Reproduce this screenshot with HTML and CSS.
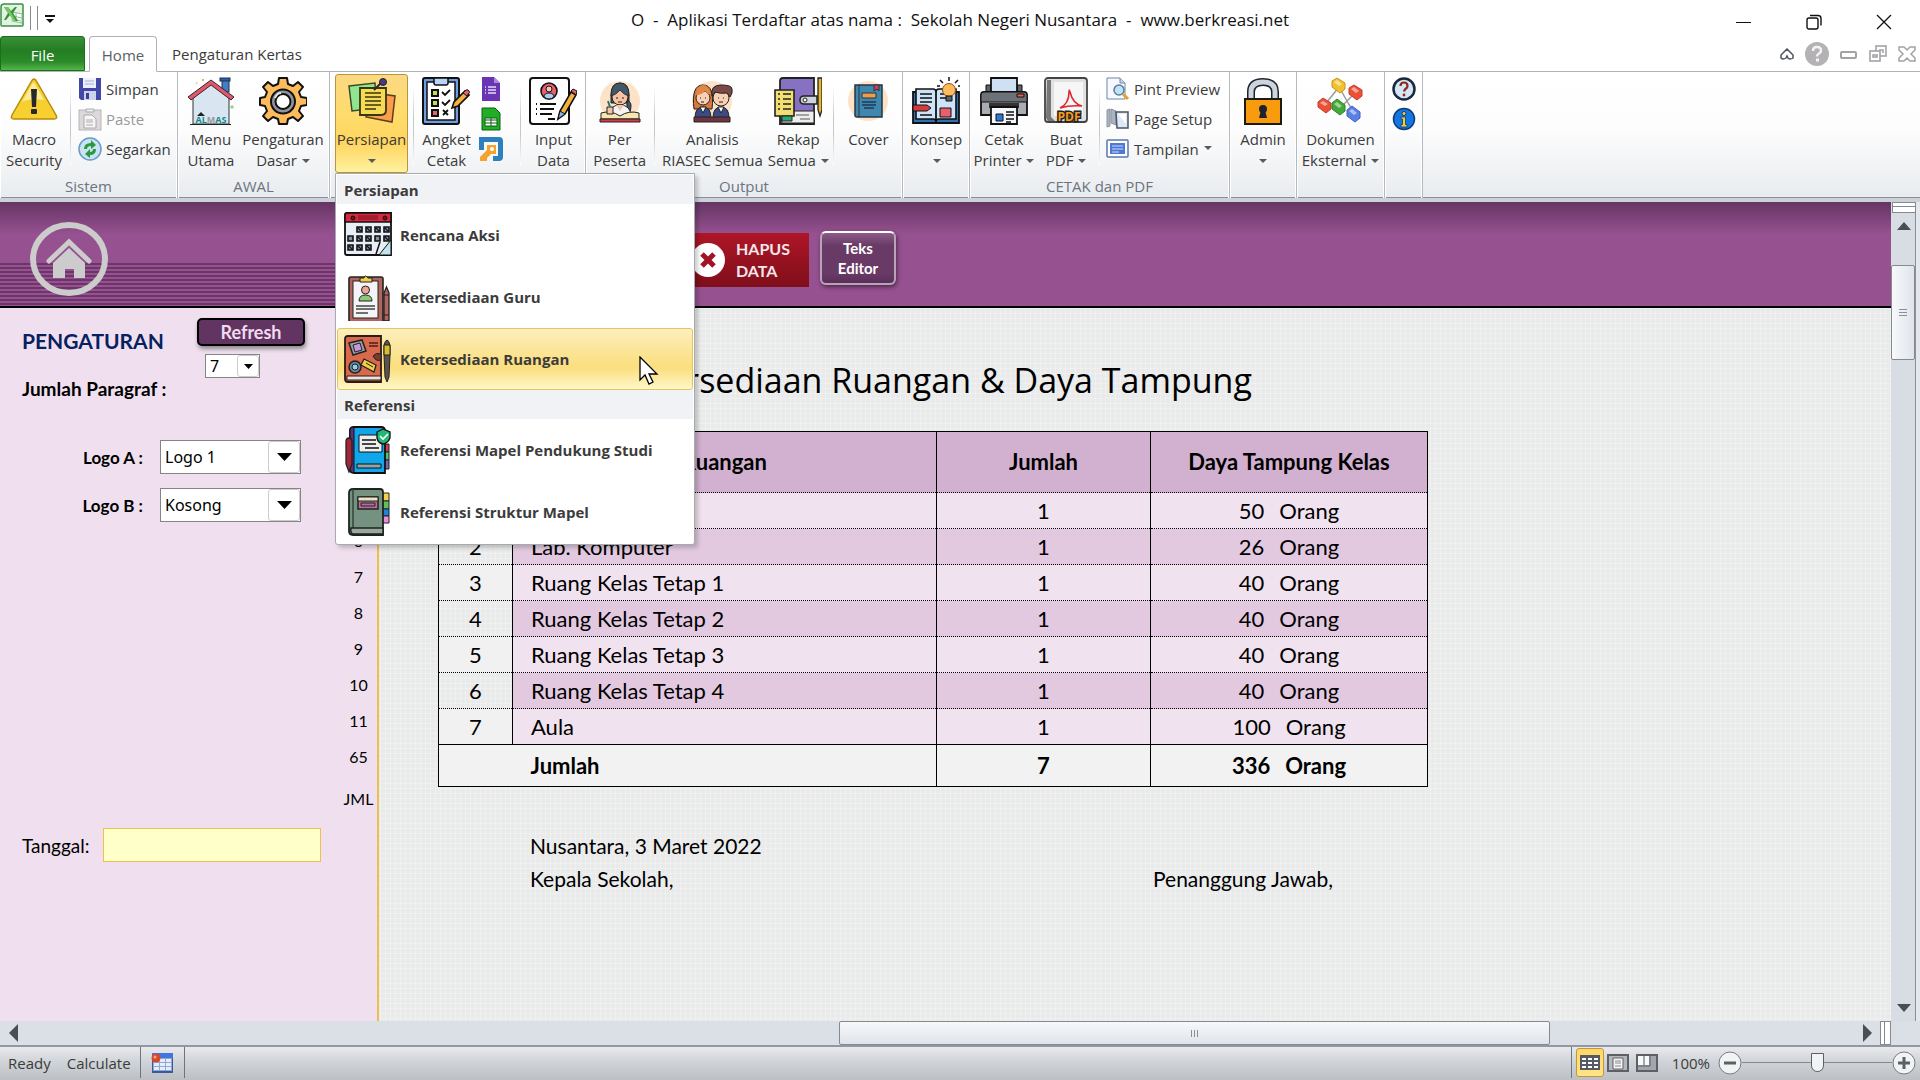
FILE: index.html
```html
<!DOCTYPE html>
<html lang="id">
<head>
    <meta charset="UTF-8">
    <meta name="viewport" content="width=device-width, initial-scale=1.0">
    <title>Ketersediaan Ruangan &amp; Daya Tampung</title>
    <link rel="stylesheet" href="styles.css">
</head>
<body>

    <header class="titlebar">
        <div class="quick-access">
            <svg width="24" height="24" viewBox="0 0 24 24">
                <path d="M4 1h18a1 1 0 0 1 1 1v20a1 1 0 0 1-1 1H2a1 1 0 0 1-1-1V4q0-3 3-3z" fill="#e3f3e1" stroke="#3f8f4a" stroke-width="1.5"/>
                <path d="M13 9l9 2v9l-10-2z" fill="#fff" stroke="#8cc08c"/>
                <path d="M13 13l9 2M13 16l8 2M16 10v9" stroke="#8cc08c"/>
                <path d="M4 4h4l3 4 4-4h2l-4 6 5 8h-4l-4-6-4 5H4l4-7z" fill="#2f9436"/>
                <path d="M4 4h4l8 14h-2z" fill="#7cc66a"/>
            </svg>
            <span class="qa-line"></span>
            <span class="qa-line"></span>
            <button class="qa-more" aria-label="Customize Quick Access Toolbar">
                <svg width="10" height="9" viewBox="0 0 10 9"><path d="M0 0h10v2H0zM1 4h8L5 8z" fill="#111"/></svg>
            </button>
        </div>
        <div class="window-title">O  -  Aplikasi Terdaftar atas nama :  Sekolah Negeri Nusantara  -  www.berkreasi.net</div>
        <div class="window-buttons">
            <button aria-label="Minimize"><svg width="16" height="16" viewBox="0 0 16 16"><path d="M0 8.5h15" stroke="#111"/></svg></button>
            <button aria-label="Restore"><svg width="16" height="16" viewBox="0 0 16 16" fill="none" stroke="#111" stroke-width="1.4"><rect x="1" y="4" width="11" height="11" rx="2"/><path d="M4 1.5h8q3 0 3 3v7"/></svg></button>
            <button aria-label="Close"><svg width="16" height="16" viewBox="0 0 16 16"><path d="M1 1l14 14M15 1L1 15" stroke="#111" stroke-width="1.3"/></svg></button>
        </div>
    </header>

    <nav class="tabs">
        <a href="#" class="tab tab-file">File</a>
        <a href="#" class="tab tab-active">Home</a>
        <a href="#" class="tab">Pengaturan Kertas</a>
        <div class="doc-buttons">
            <button aria-label="Minimize the Ribbon"><svg width="14" height="12" viewBox="0 0 14 12"><path d="M7 1l6 6v3q-3 2-5 0L7 8 6 10q-3 2-5 0V7z" fill="#fff" stroke="#4b5560" stroke-width="1.5"/></svg></button>
            <button aria-label="Help"><svg width="24" height="24" viewBox="0 0 24 24"><circle cx="12" cy="12" r="12" fill="#b4b2b4"/><path d="M8 9q0-4 4-4t4 3.500q0 2-2 3t-2 3" fill="none" stroke="#f4f4f4" stroke-width="2.500"/><rect x="11" y="16.500" width="3" height="3" fill="#f4f4f4"/></svg></button>
            <button aria-label="Minimize Window"><svg width="18" height="18" viewBox="0 0 18 18"><rect x="1" y="7" width="15" height="6" rx="1" fill="#fff" stroke="#a3a3a6" stroke-width="2"/></svg></button>
            <button aria-label="Restore Window"><svg width="18" height="18" viewBox="0 0 18 18" fill="#fff" stroke="#a3a3a6" stroke-width="1.600"><rect x="7" y="1" width="10" height="10"/><path d="M10 5h4v3"/><rect x="1" y="6" width="10" height="10"/><rect x="4" y="10" width="4" height="2"/></svg></button>
            <button aria-label="Close Window"><svg width="18" height="18" viewBox="0 0 18 18"><path d="M1 2h5l3 3 3-3h5v3l-4 4 4 4v3h-5l-3-3-3 3H1v-3l4-4-4-4z" fill="#fff" stroke="#a3a3a6" stroke-width="1.500"/></svg></button>
        </div>
    </nav>

    <div class="ribbon">
        <section class="group group-sistem">
            <div class="tools">
                <button class="big w70">
                    <svg width="48" height="48" viewBox="0 0 48 48"><path d="M21 5q3-6 6 0l19 33q2 4-2 4H4q-4 0-2-4z" fill="#f7cf2f" stroke="#b58a12" stroke-width="1.500"/><path d="M22 7q2-3 3 0l9 16q-14-2-22 2z" fill="#fdeb96"/><path d="M21 12h6l-1 18h-4z" fill="#26282b"/><rect x="21" y="32" width="6" height="5" rx="1" fill="#26282b"/></svg>
                    <span>Macro<br>Security</span>
                </button>
                <span class="sep"></span>
                <div class="stack">
                    <button class="small"><svg width="24" height="24" viewBox="0 0 24 24"><path d="M1 1h22v22H3l-2-2z" fill="#4347a8"/><path d="M5 1h13v10H5z" fill="#eef1fb"/><path d="M7 4h9M7 7h9" stroke="#a6aed8"/><rect x="6" y="14" width="12" height="9" fill="#cdd3ea"/><rect x="8" y="16" width="3" height="6" fill="#3d3f95"/></svg>Simpan</button>
                    <button class="small" disabled><svg width="24" height="24" viewBox="0 0 24 24"><rect x="1" y="3" width="22" height="20" fill="#dcd8dc" stroke="#b9b4b9"/><path d="M8 5V2h8v3z" fill="#eee" stroke="#aaa"/><path d="M6 8h8l4 4v9H6z" fill="#f7f7f7" stroke="#aaa"/><path d="M8 13h7M8 15h7M8 18h7" stroke="#aaa"/></svg>Paste</button>
                    <button class="small"><svg width="24" height="24" viewBox="0 0 24 24"><circle cx="12" cy="12" r="11" fill="#cbe3f6" stroke="#6c9ac6" stroke-width="1.500"/><path d="M6 12q0-6 7-6V3l5 5-5 4V9q-4 0-4 3z" fill="#2a9a3a"/><path d="M18 12q0 6-6 6v3l-5-4 5-5v3q3 0 3-3z" fill="#2a9a3a"/></svg>Segarkan</button>
                </div>
            </div>
            <h2>Sistem</h2>
        </section>

        <section class="group group-awal">
            <div class="tools">
                <button class="big w60">
                    <svg width="48" height="48" viewBox="0 0 48 48"><rect x="35" y="2" width="7" height="13" fill="#3f7fc8" stroke="#20304a"/><rect x="33" y="1" width="10" height="3" fill="#2b5fa5" stroke="#20304a"/><path d="M6 20L24 7l18 13v27H6z" fill="#d9e5f1" stroke="#333"/><path d="M1 20L24 3l23 17-3 3L24 8 4 23z" fill="#e0566b" stroke="#33262c"/><path d="M3 47.500h41" stroke="#222"/><path d="M10 39l4-4 4 4z" fill="#222"/><text x="24" y="46" text-anchor="middle" class="almas">AL<tspan fill="#999">M</tspan>AS</text><path d="M9 5l2 1-2 1zM15 2h2v2h-2z" fill="#f2b04e"/><path d="M45 28v4M43 30h4" stroke="#7cc66a"/></svg>
                    <span>Menu<br>Utama</span>
                </button>
                <button class="big w84">
                    <svg width="48" height="48" viewBox="0 0 48 48"><path d="M20 1h8l1 6 5 2 5-4 5 5-4 5 2 5 6 1v7l-6 1-2 5 4 5-5 5-5-4-5 2-1 5h-8l-1-5-5-2-5 4-5-5 4-5-2-5-5-1v-7l5-1 2-5-4-5 5-5 5 4 5-2z" fill="#fdbb5b" stroke="#111" stroke-width="2" stroke-linejoin="round"/><circle cx="24" cy="24.500" r="12" fill="#8f949c" stroke="#111" stroke-width="2"/><circle cx="24" cy="24.500" r="7.500" fill="#fff" stroke="#111" stroke-width="2"/><path d="M16 21q2-5 6-5" fill="none" stroke="#dfe2e6" stroke-width="2"/></svg>
                    <span>Pengaturan<br>Dasar <i class="caret"></i></span>
                </button>
            </div>
            <h2>AWAL</h2>
        </section>

        <section class="group group-persiapan">
            <div class="tools">
                <div class="menu-anchor">
                    <button class="big w73 open" aria-haspopup="true" aria-expanded="true">
                        <svg width="48" height="48" viewBox="0 0 48 48"><path d="M1 9l26-3 1 25-24 3z" fill="#8fe68e" stroke="#3c4a2a" stroke-width="1.500"/><path d="M26 16l21 3-3 26-26-5z" fill="#fb9d4c" stroke="#5a3f1a" stroke-width="1.500"/><path d="M12 11h26v22q0 5-5 5H12z" fill="#f5da55" stroke="#3c3512" stroke-width="1.800"/><path d="M17 16h16M17 20h16M17 24h16M17 28h16M17 32h11" stroke="#3c3512" stroke-width="1.600"/><path d="M26 13l7-7" stroke="#2c2630" stroke-width="2"/><circle cx="35" cy="5" r="3.500" fill="#4a3a86" stroke="#222"/></svg>
                        <span>Persiapan<br><i class="caret"></i></span>
                    </button>

                    <div class="menu" role="menu">
                        <h3>Persiapan</h3>
                        <button class="menu-item" role="menuitem">
                            <svg width="48" height="48" viewBox="0 0 48 48"><path d="M1 4q0-2 2-2h44v42H3q-2 0-2-2z" fill="#e9edf5" stroke="#111" stroke-width="1.800"/><path d="M1 4q0-2 2-2h44v9H1z" fill="#d6293f" stroke="#111" stroke-width="1.500"/><path d="M14 4h20v5H14z" fill="#a81c30"/><circle cx="9" cy="7" r="2" fill="#7d1222" stroke="#111"/><circle cx="41" cy="7" r="2" fill="#7d1222" stroke="#111"/><g fill="#7f93ad" stroke="#111" stroke-width="1.600"><path d="M13 16h5v5h-5zM22 16h5v5h-5zM31 16h5v5h-5zM40 16h5v5h-5zM4 25h5v5H4zM13 25h5v5h-5zM22 25h5v5h-5zM31 25h5v5h-5zM40 25h5v5h-5zM4 34h5v5H4zM13 34h5v5h-5zM22 34h5v5h-5z"/><path d="M14 17l3 3M23 17l3 3M32 17l3 3M41 17l3 3M14 26l3 3M23 26l3 3M41 26l3 3M5 35l3 3M14 35l3 3M23 35l3 3" stroke-width="1.200"/></g><path d="M35 44L47 29v15z" fill="#bfe4ee" stroke="#111"/><path d="M36 31l-4 12" stroke="#111" stroke-width="1.500"/></svg>
                            Rencana Aksi
                        </button>
                        <button class="menu-item" role="menuitem">
                            <svg width="48" height="48" viewBox="0 0 48 48"><rect x="5" y="4" width="34" height="45" rx="2" fill="#b0655f" stroke="#222" stroke-width="1.600"/><rect x="9" y="8" width="25" height="37" fill="#f4f4f6" stroke="#222"/><path d="M16 9V5h4q1-4 4 0h4v4z" fill="#f1d14b" stroke="#222"/><circle cx="21.500" cy="17" r="4" fill="#eba59a" stroke="#222"/><path d="M15 28q0-6 6.500-6t6.500 6z" fill="#8fc878" stroke="#222"/><path d="M12 33h19M12 36h19M12 40h12" stroke="#444" stroke-width="1.600"/><path d="M40 20l2.500-6 2.500 6v28h-5z" fill="#b0655f" stroke="#222" stroke-width="1.300"/><path d="M40 22h5M40 42h5" stroke="#222"/></svg>
                            Ketersediaan Guru
                        </button>
                        <button class="menu-item hover" role="menuitem">
                            <svg width="48" height="48" viewBox="0 0 48 48"><path d="M1 4q0-3 3-3h33v46H4q-3 0-3-3z" fill="#d8694d" stroke="#2b1a16" stroke-width="1.800"/><path d="M3 41h34v4H3z" fill="#e9e2df" stroke="#2b1a16"/><path d="M5 8l13-3 4 11-13 4z" fill="#999da4" stroke="#222" stroke-width="1.500"/><path d="M9 10l7-2 2 7-7 2z" fill="#c496dc" stroke="#222"/><path d="M25 8h9M25 11h9" stroke="#4a2018" stroke-width="1.500"/><circle cx="11" cy="32" r="6" fill="#6b8294" stroke="#222" stroke-width="1.500"/><circle cx="11" cy="32" r="3" fill="#8ed0ef" stroke="#222"/><path d="M20 24l12 6-2 7-13-7z" fill="#f0cf45" stroke="#222" stroke-width="1.300"/><path d="M22 28l7 4" stroke="#222"/><path d="M29 21q3-4 8-2v6q-5 2-8-4z" fill="#7a3a2e" stroke="#222"/><path d="M40 10q3-10 6 0v10l-1 22-2 5-2-5-1-22z" fill="#5b5549" stroke="#222"/><path d="M40 10h6v10h-6z" fill="#d8bd31" stroke="#222"/></svg>
                            Ketersediaan Ruangan
                            <svg class="cursor" width="20" height="29" viewBox="0 0 20 29"><path d="M1 1v23l5-5 4 9 4-2-4-8h8z" fill="#fff" stroke="#000" stroke-width="1.300"/></svg>
                        </button>
                        <h3>Referensi</h3>
                        <button class="menu-item" role="menuitem">
                            <svg width="48" height="48" viewBox="0 0 48 48"><path d="M36 18h9v8h-9z" fill="#d83a4c" stroke="#222"/><path d="M36 26h9v8h-9z" fill="#4cc46b" stroke="#222"/><path d="M36 34h9v9h-9z" fill="#7c63b8" stroke="#222"/><path d="M6 4q0-3 4-3h27q4 0 4 4v42H10q-4 0-4-4z" fill="#10a6ea" stroke="#111" stroke-width="1.800"/><path d="M6 4q0-3 4-3v46q-4 0-4-4z" fill="#54357c" stroke="#111"/><path d="M15 9h23v17H15z" fill="#eee" stroke="#111"/><path d="M18 14h14M18 18h14M21 22h14" stroke="#111" stroke-width="1.600"/><path d="M13 38h24v4H13z" fill="#8fa5ad" stroke="#111"/><path d="M33 6l6-3 7 3v6q-2 5-7 6-5-1-6-6z" fill="#21b877" stroke="#111" stroke-width="1.300"/><path d="M36 10l3 3 5-5" fill="none" stroke="#fff" stroke-width="1.600"/><path d="M2 16q0-4 3-4t3 4v22l-3 8-3-8z" fill="#a32537" stroke="#222" stroke-width="1.300"/></svg>
                            Referensi Mapel Pendukung Studi
                        </button>
                        <button class="menu-item" role="menuitem">
                            <svg width="48" height="48" viewBox="0 0 48 48"><path d="M38 5h7v8h-7z" fill="#f1d14b" stroke="#222"/><path d="M38 13h7v8h-7z" fill="#62bd5e" stroke="#222"/><path d="M38 21h7v7h-7z" fill="#1b86dc" stroke="#222"/><path d="M38 28h7v7h-7z" fill="#e88fd8" stroke="#222"/><path d="M5 5q0-4 4-4h27q3 0 3 3v43H9q-4 0-4-4z" fill="#75917f" stroke="#1d2420" stroke-width="1.800"/><path d="M9 1v39" stroke="#35443b" stroke-width="1.500"/><path d="M7 40h32v6H9q-3-1-2-6z" fill="#9aa79f" stroke="#1d2420" stroke-width="1.500"/><path d="M14 9h20v12H14z" fill="#c268a0" stroke="#1d2420" stroke-width="1.500"/><path d="M14 9h20v4H14z" fill="#efe3c4" stroke="#1d2420"/><path d="M17 15h14v3H17z" fill="#a2779a" stroke="#1d2420"/></svg>
                            Referensi Struktur Mapel
                        </button>
                    </div>
                </div>
                <span class="sep"></span>
                <button class="big w60">
                    <svg width="48" height="48" viewBox="0 0 48 48"><rect x="1" y="1" width="36" height="46" rx="2" fill="#6f9de0" stroke="#111" stroke-width="2"/><path d="M5 5h28v38H5z" fill="#fff" stroke="#111" stroke-width="1.500"/><path d="M12 1h14v5q0 2-2 2H14q-2 0-2-2z" fill="#b8d3f6" stroke="#111" stroke-width="1.500"/><g stroke="#111" stroke-width="2"><path d="M10 13h6v6h-6zM10 23h6v6h-6z" fill="#c6dd4c"/><path d="M10 33h6v6h-6z" fill="#e8606c"/></g><path d="M20 15l3 3 5-5M20 25l3 3 5-5M21 33l5 5M26 33l-5 5" fill="none" stroke="#111" stroke-width="1.800"/><path d="M30 31l2-6 11-11 4 4-11 11z" fill="#f5b23f" stroke="#111" stroke-width="1.600"/><path d="M41 16l3-3q2-1 3 1t0 2l-2 3z" fill="#e8606c" stroke="#111"/></svg>
                    <span>Angket<br>Cetak</span>
                </button>
                <div class="stack stack-angket">
                    <button class="small" aria-label="Google Forms"><svg width="24" height="24" viewBox="0 0 24 24"><path d="M3 0h12l6 6v18H3z" fill="#6a35b5"/><path d="M15 0v6h6z" fill="#a78bd8"/><path d="M6 10h1M6 13h1M6 16h1M9 10h8M9 13h8M9 16h8" stroke="#e6dbf8" stroke-width="1.500"/></svg></button>
                    <button class="small" aria-label="Google Sheets"><svg width="24" height="24" viewBox="0 0 24 24"><path d="M3 1h13l5 5v17H3z" fill="#1fae26" stroke="#0c5c12"/><path d="M6 11h12v8H6z" fill="#fff" stroke="#0c5c12"/><path d="M6 13h12M6 16h12M12 11v8" stroke="#0c5c12"/></svg></button>
                    <button class="small" aria-label="Angket Online"><svg width="24" height="24" viewBox="0 0 24 24"><path d="M0 0h20q4 0 4 4v16q0 4-4 4h-6v-5h5V5H5v8H0z" fill="#2d7fbe"/><path d="M8 8h9v9h-5l-4 4v3H1v-4l7-7z" fill="#f5a32f"/><circle cx="13" cy="12" r="2" fill="#fff"/></svg></button>
                </div>
                <span class="sep"></span>
                <button class="big w60">
                    <svg width="48" height="48" viewBox="0 0 48 48"><rect x="1" y="1" width="39" height="46" rx="3" fill="#fff" stroke="#111" stroke-width="2"/><circle cx="20" cy="14" r="8" fill="#e8606c" stroke="#111" stroke-width="1.600"/><circle cx="20" cy="12" r="3" fill="#f7c6b4" stroke="#111"/><path d="M15 20q0-4 5-4t5 4q-5 4-10 0z" fill="#a9cdf2" stroke="#111"/><path d="M7 27h1M11 27h16M7 32h1M11 32h14M7 37h1M11 37h12M19 42h7" stroke="#111" stroke-width="1.800"/><path d="M29 42l2-8 11-19 5 3-11 19z" fill="#f5b23f" stroke="#111" stroke-width="1.600"/><path d="M29 42l2-8 5 3z" fill="#7fb2e6" stroke="#111"/><path d="M42 14l2-2 4 2-1 4z" fill="#e8606c" stroke="#111"/></svg>
                    <span>Input<br>Data</span>
                </button>
            </div>
            <h2></h2>
        </section>

        <section class="group group-output">
            <div class="tools">
                <button class="big w64">
                    <svg width="48" height="48" viewBox="0 0 48 48"><circle cx="24" cy="24" r="20" fill="#fce3c8"/><path d="M15 18q0-12 9-12t9 12v8H15z" fill="#41586b" stroke="#222"/><circle cx="24" cy="20" r="8" fill="#f6c4a4" stroke="#222"/><path d="M15 19q5-1 9-6 4 5 9 6 0-13-9-13t-9 13z" fill="#41586b" stroke="#222" stroke-width=".8"/><path d="M31 24q4 0 4 5t-2 7q-3-4-2-12z" fill="#41586b" stroke="#222"/><path d="M13 40q0-12 11-12t11 12z" fill="#f4f4f6" stroke="#222"/><path d="M20 28l4 6 4-6z" fill="#f6c4a4"/><path d="M20 21h2M26 21h2M22 25h4" stroke="#222"/><path d="M5 36q10-3 19 3 9-6 19-3v6H5z" fill="#f7e7b0" stroke="#222"/><path d="M4 42h40v3H4z" fill="#d83a4c" stroke="#222"/><path d="M11 30h6v7h-6z" fill="#f6c4a4" stroke="#222"/><path d="M12 24l2 6" stroke="#1f7a6c" stroke-width="2"/></svg>
                    <span>Per<br>Peserta</span>
                </button>
                <span class="sep"></span>
                <button class="big w108">
                    <svg width="48" height="48" viewBox="0 0 48 48"><circle cx="24" cy="24" r="20" fill="#fce3c8"/><path d="M6 32q-3-24 9-24t9 24z" fill="#d9783c" stroke="#222"/><circle cx="15" cy="21" r="7" fill="#f9d0b4" stroke="#222"/><path d="M8 18q6 0 9-4 3 4 5 3-1-9-7-9t-7 10z" fill="#e28846"/><circle cx="33" cy="21" r="8" fill="#f9d0b4" stroke="#222"/><path d="M24 19q-2-11 9-11t11 4q1 4-2 8l-3-4q-7 1-12-1z" fill="#7b4a46" stroke="#222"/><path d="M7 41q0-11 8-11t8 11zM25 41q0-11 8-11t8 11z" fill="#3c4a86" stroke="#222"/><path d="M12 30l3 6 3-6zM30 30l3 6 3-6z" fill="#fff" stroke="#222"/><path d="M12 21h1M17 21h1M30 21h1M35 21h1M13 25h3M31 25h4" stroke="#222"/><path d="M6 40h36v5H6z" fill="#6e3440" stroke="#222"/></svg>
                    <span>Analisis<br>RIASEC Semua</span>
                </button>
                <button class="big w64">
                    <svg width="48" height="48" viewBox="0 0 48 48"><path d="M6 4q0-3 3-3h31v46H6z" fill="#8671c2" stroke="#222" stroke-width="1.800"/><path d="M6 34h34v12H8z" fill="#eee" stroke="#222"/><path d="M22 38h13M26 42h10" stroke="#555"/><path d="M26 23q0-4 4-4h13v8H30q-4 0-4-4z" fill="#cfd3db" stroke="#222" stroke-width="1.500"/><circle cx="31" cy="23" r="2" fill="#fff" stroke="#222"/><path d="M1 13h19v26H1z" fill="#f2df72" stroke="#222" stroke-width="1.600"/><path d="M4 17h2M9 17h8M4 22h2M9 22h8M4 27h2M9 27h8M4 32h2M9 32h8" stroke="#222" stroke-width="1.600"/><path d="M8 39h10v5H8z" fill="#27ab74" stroke="#222"/><path d="M44 1h4v32l-2 6-2-6z" fill="#e5b92f" stroke="#222" stroke-width="1.300"/></svg>
                    <span>Rekap<br>Semua <i class="caret"></i></span>
                </button>
                <span class="sep"></span>
                <button class="big w64">
                    <svg width="48" height="48" viewBox="0 0 48 48"><circle cx="24" cy="24" r="20" fill="#fce3c8"/><path d="M11 8h27v32H13q-2 0-2-2z" fill="#3f87ad" stroke="#233646" stroke-width="1.500"/><path d="M15 8v32" stroke="#233646"/><path d="M30 8h5v6l-2-2-3 2z" fill="#d83a4c" stroke="#233646"/><path d="M18 16h14v5H18z" fill="#f39a4a" stroke="#233646"/><path d="M18 25h14M18 28h14M20 31h10" stroke="#1e3a54" stroke-width="1.300"/></svg>
                    <span>Cover<br>&nbsp;</span>
                </button>
            </div>
            <h2>Output</h2>
        </section>

        <section class="group group-konsep">
            <div class="tools">
                <button class="big w64">
                    <svg width="48" height="48" viewBox="0 0 48 48"><path d="M1 15h46v31H1z" fill="#2f6fb2" stroke="#111" stroke-width="1.800"/><path d="M4 12h17q3 0 3 3 0-3 3-3h17v30H27q-3 0-3 3 0-3-3-3H4z" fill="#cfe3f8" stroke="#111" stroke-width="1.600"/><path d="M24 15v32" stroke="#111" stroke-width="1.800"/><path d="M8 17h12M8 21h12M8 25h12M8 38h12M28 17h5M28 21h7" stroke="#111" stroke-width="1.500"/><path d="M1 28h14l4 3-4 3H1z" fill="#d43b3b" stroke="#111"/><path d="M28 31h11v9H28z" fill="#e8606c" stroke="#111"/><circle cx="37" cy="13" r="6.500" fill="#fdbb5b" stroke="#8a4a1c"/><path d="M34 19h6v5h-6z" fill="#59616b" stroke="#111"/><path d="M37 0v4M28 3l3 3M46 3l-3 3M25 9h3M46 9h2" stroke="#111" stroke-width="1.500"/></svg>
                    <span>Konsep<br><i class="caret"></i></span>
                </button>
            </div>
            <h2></h2>
        </section>

        <section class="group group-cetak">
            <div class="tools">
                <button class="big w64">
                    <svg width="48" height="48" viewBox="0 0 48 48"><path d="M6 8h5v10H6zM37 8h5v10h-5z" fill="#59616b" stroke="#111"/><path d="M11 1h26v16H11z" fill="#cfe0f5" stroke="#111" stroke-width="1.800"/><path d="M1 18q0-3 3-3h40q3 0 3 3v20H1z" fill="#a9adb3" stroke="#111" stroke-width="1.800"/><path d="M1 18q0-3 3-3h40q3 0 3 3v7H1z" fill="#6d7178" stroke="#111"/><path d="M37 17h7v3h-7z" fill="#f05f4e" stroke="#111"/><path d="M9 26h30v5H9z" fill="#333"/><path d="M11 30h26v17H11z" fill="#f3f7fc" stroke="#111" stroke-width="1.800"/><path d="M16 37h7v7h-7z" fill="#2c78d2" stroke="#111"/><path d="M26 35h8M26 38h8M26 42h8M26 45h5" stroke="#111" stroke-width="1.500"/></svg>
                    <span>Cetak<br>Printer <i class="caret"></i></span>
                </button>
                <button class="big w60">
                    <svg width="48" height="48" viewBox="0 0 48 48"><rect x="3" y="1" width="42" height="44" rx="3" fill="#e1e1e1" stroke="#444" stroke-width="1.800"/><path d="M5 3h4v37l4 4H6l-2-3z" fill="#777"/><path d="M12 5h29v34H12z" fill="#f6f6f6"/><path d="M18 31q9-4 9-16 0-4 1 0 3 12 12 14-12-1-22 2z" fill="none" stroke="#e0282e" stroke-width="1.600"/><text x="27" y="44" text-anchor="middle" class="pdf">PDF</text></svg>
                    <span>Buat<br>PDF <i class="caret"></i></span>
                </button>
                <span class="sep"></span>
                <div class="stack">
                    <button class="small"><svg width="24" height="24" viewBox="0 0 24 24"><path d="M1 1h13l5 5v16H1z" fill="#f6f9fe" stroke="#6d87ad"/><path d="M14 1v5h5" fill="#c8d6ea" stroke="#6d87ad"/><circle cx="13" cy="13" r="5" fill="#bfe2f6" stroke="#5e7c9d" stroke-width="1.500"/><path d="M17 17l5 5" stroke="#e0a231" stroke-width="3"/></svg>Pint Preview</button>
                    <button class="small"><svg width="24" height="24" viewBox="0 0 24 24"><path d="M1 3l3-1v17l-3 1zM5 2l5 2v14l-5-2z" fill="#aab4c1" stroke="#8b94a0"/><path d="M10 5h12v16H11z" fill="#dfe9f6" stroke="#4b5462" stroke-width="1.500"/><path d="M12 7h8v10z" fill="#fff"/></svg>Page Setup</button>
                    <button class="small"><svg width="24" height="24" viewBox="0 0 24 24"><rect x="1" y="3" width="21" height="17" rx="1" fill="#fff" stroke="#5b77a9" stroke-width="1.500"/><path d="M4 6h15v11H4z" fill="#4e77d8"/><path d="M6 9h11M6 12h11M6 15h7" stroke="#cddcfb"/></svg>Tampilan <i class="caret"></i></button>
                </div>
            </div>
            <h2>CETAK dan PDF</h2>
        </section>

        <section class="group group-konsep">
            <div class="tools">
                <button class="big w64">
                    <svg width="48" height="48" viewBox="0 0 48 48"><path d="M12 23V15q0-10 12-10t12 10v8" fill="none" stroke="#1d2430" stroke-width="8"/><path d="M12 23V15q0-10 12-10t12 10v8" fill="none" stroke="#cdd4dd" stroke-width="5"/><path d="M6 22h36v25H6z" fill="#f89c0e" stroke="#1d1a12" stroke-width="2"/><circle cx="24" cy="32" r="4" fill="#1d2430"/><path d="M22 33h4l2 8h-8z" fill="#1d2430"/></svg>
                    <span>Admin<br><i class="caret"></i></span>
                </button>
            </div>
            <h2></h2>
        </section>

        <section class="group group-dokumen">
            <div class="tools">
                <button class="big w84">
                    <svg width="48" height="48" viewBox="0 0 48 48"><path d="M22 10L6 30M22 10l16 28M38 16L22 32" stroke="#9a9a9a" stroke-width="1.500"/><path d="M15 4l5-3 8 5v6l-5 4-8-6z" fill="#f1c22e" stroke="#c4951c"/><path d="M32 11l5-3 8 5v6l-5 4-8-6z" fill="#ec5037" stroke="#c33d28"/><path d="M1 25l5-4 8 5v6l-5 4-8-6z" fill="#ec5037" stroke="#c33d28"/><path d="M15 26l5-4 8 6v6l-5 4-8-6z" fill="#43a838" stroke="#2f852a"/><path d="M30 33l5-4 8 6v6l-5 4-8-6z" fill="#5b80e4" stroke="#3e60c0"/><path d="M17 5l3-2 5 4-3 2zM34 12l3-2 5 4-3 2zM3 26l3-2 5 3-3 2zM17 27l3-2 5 4-3 2zM32 34l3-2 5 4-3 2z" fill="#fff" opacity=".5"/></svg>
                    <span>Dokumen<br>Eksternal <i class="caret"></i></span>
                </button>
            </div>
            <h2></h2>
        </section>

        <section class="group group-bantuan">
            <div class="tools">
                <div class="stack">
                    <button class="small" aria-label="Bantuan"><svg width="24" height="24" viewBox="0 0 24 24"><circle cx="12" cy="12" r="10.500" fill="#d5e6f5" stroke="#1a2a3e" stroke-width="2.500"/><path d="M8.500 9q0-3.500 3.500-3.500T15.500 9q0 1.500-1.500 2.500T12 14.500" fill="none" stroke="#8d2a20" stroke-width="2.200"/><circle cx="12" cy="18" r="1.400" fill="#8d2a20"/></svg></button>
                    <button class="small" aria-label="Informasi"><svg width="24" height="24" viewBox="0 0 24 24"><circle cx="12" cy="12" r="10.500" fill="#1277e2" stroke="#123b74" stroke-width="1.500"/><circle cx="12" cy="6.500" r="2" fill="#f7cd33" stroke="#123b74"/><path d="M9 10h4.500v7.500H15V20H9v-2.500h1.500V12H9z" fill="#f7cd33" stroke="#123b74" stroke-width=".8"/></svg></button>
                </div>
            </div>
            <h2></h2>
        </section>
    </div>

    <div class="workspace">
        <main class="sheet">
            <div class="banner">
                <div class="banner-side">
                    <a href="#" class="home" aria-label="Menu Utama">
                        <svg width="80" height="76" viewBox="0 0 80 76"><ellipse cx="40" cy="38" rx="36" ry="34" fill="none" stroke="#ccc" stroke-width="6"/><path d="M20 40l20-19 20 19" fill="none" stroke="#ccc" stroke-width="5" stroke-linecap="round"/><path d="M24 42l16-15 16 15v15H45v-9h-9v9H24z" fill="#ccc"/></svg>
                    </a>
                </div>
                <div class="banner-actions">
                    <button class="btn-hapus">
                        <svg width="34" height="34" viewBox="0 0 34 34"><circle cx="17" cy="17" r="17" fill="#fff"/><path d="M11 11l12 12M23 11L11 23" stroke="#a01425" stroke-width="5"/></svg>
                        <span>HAPUS<br>DATA</span>
                    </button>
                    <button class="btn-teks">Teks<br>Editor</button>
                </div>
            </div>

            <div class="sheet-body">
                <aside class="settings">
                    <form class="settings-form">
                        <div class="settings-top">
                            <h2>PENGATURAN</h2>
                            <button type="button" class="btn-refresh">Refresh</button>
                        </div>
                        <div class="field-paragraf">
                            <label for="paragraf">Jumlah Paragraf :</label>
                            <div class="select select-small">
                                <select id="paragraf"><option>7</option></select>
                                <span class="select-arrow"><svg width="9" height="5" viewBox="0 0 9 5"><path d="M0 0h9L4.500 5z"/></svg></span>
                            </div>
                        </div>
                        <div class="field-logo">
                            <label for="logoA">Logo A :</label>
                            <div class="select">
                                <select id="logoA"><option>Logo 1</option></select>
                                <span class="select-arrow"><svg width="15" height="8" viewBox="0 0 15 8"><path d="M0 0h15L7.500 8z"/></svg></span>
                            </div>
                        </div>
                        <div class="field-logo">
                            <label for="logoB">Logo B :</label>
                            <div class="select">
                                <select id="logoB"><option>Kosong</option></select>
                                <span class="select-arrow"><svg width="15" height="8" viewBox="0 0 15 8"><path d="M0 0h15L7.500 8z"/></svg></span>
                            </div>
                        </div>
                        <div class="field-tanggal">
                            <label for="tanggal">Tanggal:</label>
                            <input type="text" id="tanggal">
                        </div>
                    </form>
                    <ul class="row-numbers">
                        <li>6</li>
                        <li>7</li>
                        <li>8</li>
                        <li>9</li>
                        <li>10</li>
                        <li>11</li>
                        <li>65</li>
                        <li class="row-total">JML</li>
                    </ul>
                </aside>

                <article class="report">
                    <h1>Ketersediaan Ruangan &amp; Daya Tampung</h1>
                    <table>
                        <colgroup><col class="col-no"><col class="col-nama"><col class="col-jumlah"><col class="col-daya"></colgroup>
                        <thead>
                            <tr><th></th><th>Ruangan</th><th>Jumlah</th><th>Daya Tampung Kelas</th></tr>
                        </thead>
                        <tbody>
                            <tr><td></td><td></td><td>1</td><td>50<span>Orang</span></td></tr>
                            <tr><td>2</td><td>Lab. Komputer</td><td>1</td><td>26<span>Orang</span></td></tr>
                            <tr><td>3</td><td>Ruang Kelas Tetap 1</td><td>1</td><td>40<span>Orang</span></td></tr>
                            <tr><td>4</td><td>Ruang Kelas Tetap 2</td><td>1</td><td>40<span>Orang</span></td></tr>
                            <tr><td>5</td><td>Ruang Kelas Tetap 3</td><td>1</td><td>40<span>Orang</span></td></tr>
                            <tr><td>6</td><td>Ruang Kelas Tetap 4</td><td>1</td><td>40<span>Orang</span></td></tr>
                            <tr><td>7</td><td>Aula</td><td>1</td><td>100<span>Orang</span></td></tr>
                        </tbody>
                        <tfoot>
                            <tr><td></td><td>Jumlah</td><td>7</td><td>336<span>Orang</span></td></tr>
                        </tfoot>
                    </table>
                    <div class="signature">
                        <p>Nusantara, 3 Maret 2022<br>Kepala Sekolah,</p>
                        <p>Penanggung Jawab,</p>
                    </div>
                </article>
            </div>
        </main>

        <div class="vscroll">
            <span class="split-v"></span>
            <button aria-label="Scroll up"><svg width="14" height="8" viewBox="0 0 14 8"><path d="M0 8h14L7 0z" fill="#4a4d52"/></svg></button>
            <div class="track-v"><span class="thumb-v"></span></div>
            <button aria-label="Scroll down"><svg width="14" height="8" viewBox="0 0 14 8"><path d="M0 0h14L7 8z" fill="#4a4d52"/></svg></button>
        </div>
    </div>

    <div class="hscroll">
        <button aria-label="Scroll left"><svg width="9" height="18" viewBox="0 0 9 18"><path d="M9 0v18L0 9z" fill="#4a4d52"/></svg></button>
        <div class="track-h"><span class="thumb-h"></span></div>
        <button aria-label="Scroll right"><svg width="9" height="18" viewBox="0 0 9 18"><path d="M0 0v18l9-9z" fill="#4a4d52"/></svg></button>
        <span class="split-h"></span>
    </div>

    <footer class="statusbar">
        <span>Ready</span>
        <span>Calculate</span>
        <button class="macro" aria-label="Record Macro">
            <svg width="22" height="20" viewBox="0 0 22 20"><path d="M1 0h21v20H1z" fill="#3c5a9a"/><path d="M1 0h21v5H1z" fill="#3f78dd"/><path d="M2 5h19v13H2z" fill="#8fa8d8"/><path d="M3 6h5v3H3zM9 6h5v3H9zM15 6h5v3h-5zM3 10h5v3H3zM9 10h5v3H9zM15 10h5v3h-5zM3 14h5v3H3zM9 14h5v3H9zM15 14h5v3h-5z" fill="#e6eefb"/><circle cx="5" cy="5" r="4.500" fill="#d9482b"/><circle cx="4" cy="4" r="1.500" fill="#f6a58d"/></svg>
        </button>
        <div class="views">
            <button class="view active" aria-label="Normal"><svg width="20" height="15" viewBox="0 0 20 15"><path d="M0 0h20v15H0z" fill="#555a63"/><path d="M2 3h4v2H2zM8 3h4v2H8zM14 3h4v2h-4zM2 7h4v2H2zM8 7h4v2H8zM14 7h4v2h-4zM2 11h4v2H2zM8 11h4v2H8zM14 11h4v2h-4z" fill="#fff"/></svg></button>
            <button class="view" aria-label="Page Layout"><svg width="22" height="18" viewBox="0 0 22 18"><path d="M1 1h20v16H1z" fill="#b4b7bc" stroke="#5d6167" stroke-width="2"/><path d="M6 4h10v11H6z" fill="#f4f4f4" stroke="#5d6167"/><path d="M8 7h6M8 9h6M8 12h6" stroke="#888"/></svg></button>
            <button class="view" aria-label="Page Break Preview"><svg width="22" height="18" viewBox="0 0 22 18"><path d="M1 1h20v16H1z" fill="#a3a7ad" stroke="#5d6167" stroke-width="2"/><path d="M2 2h5v9H2zM9 2h4v9H9z" fill="#f8f8f8"/><path d="M2 12h12V2" fill="none" stroke="#5d6167"/></svg></button>
        </div>
        <label class="zoom-label" for="zoom">100%</label>
        <div class="zoom">
            <button aria-label="Zoom out"><svg width="24" height="24" viewBox="0 0 24 24"><circle cx="12" cy="12" r="11" fill="#f2f3f4" stroke="#777b82"/><path d="M6 12h12" stroke="#5d6167" stroke-width="3"/></svg></button>
            <input type="range" id="zoom" min="0" max="100" value="50">
            <button aria-label="Zoom in"><svg width="24" height="24" viewBox="0 0 24 24"><circle cx="12" cy="12" r="11" fill="#f2f3f4" stroke="#777b82"/><path d="M6 12h12M12 6v12" stroke="#5d6167" stroke-width="3"/></svg></button>
        </div>
    </footer>

</body>
</html>
```
FILE: styles.css
```css
* { box-sizing: border-box; }
body { font-family: "Open Sans", "Noto Sans", sans-serif; font-size: 15px; color: #3b3b3b; background: #fff; margin: 0; height: 100vh; display: flex; flex-direction: column; overflow: hidden; }
h1, h2, h3, p, ul { margin: 0; padding: 0; font-weight: 400; }
button { font: inherit; color: inherit; background: none; border: 0; padding: 0; cursor: pointer; }
svg { display: block; flex: none; }
a { color: inherit; text-decoration: none; }

/* title bar */
.titlebar { display: grid; grid-template-columns: 1fr auto 1fr; align-items: center; height: 36px; flex: none; }
.quick-access { display: flex; align-items: center; gap: 6px; padding: 0 0 8px 0; }
.qa-line { width: 1px; height: 24px; background: #8a8a8a; margin-top: 6px; }
.qa-more { margin: 8px 0 0 1px; }
.window-title { font-size: 17px; color: #111; white-space: pre; }
.window-buttons { display: flex; justify-content: flex-end; gap: 54px; padding: 6px 28px 0 0; }

/* tabs */
.tabs { display: flex; align-items: flex-end; height: 36px; border-bottom: 1px solid #b0b4b4; flex: none; }
.tab { height: 35px; line-height: 36px; padding: 0 15px; }
.tab-file { width: 85px; padding: 0; margin-right: 4px; text-align: center; color: #fff; border: 1px solid #19701c; border-radius: 3px 3px 0 0; background: linear-gradient(#3b8f38, #237d22 40%, #2b8a29 75%, #52b648); }
.tab-active { width: 68px; padding: 0; text-align: center; color: #5a5f66; height: 36px; margin-bottom: -1px; border: 1px solid #b0b4b4; border-bottom-color: #fff; border-radius: 4px 4px 0 0; background: #fff; }
.doc-buttons { display: flex; align-items: center; gap: 11px; margin-left: auto; padding: 0 4px 5px 0; }

/* ribbon */
.ribbon { display: flex; height: 130px; flex: none; border-bottom: 4px solid #cdd2d9; background: linear-gradient(#fff, #fdfdfd 45%, #e8ebef); box-shadow: inset 0 -1px #8b9097; }
.group { display: flex; flex-direction: column; border-right: 1px solid #b5b9be; box-shadow: inset 1px 0 #fff, inset -1px 0 #fff; }
.tools { display: flex; padding: 2px 2px 0; height: 104px; }
.group h2 { text-align: center; color: #6c7480; font-size: 15px; line-height: 20px; height: 22px; }
.group-sistem { width: 178px; }
.group-sistem .tools { padding-left: 0; }
.group-awal { width: 152px; }
.group-awal .tools { padding-left: 3px; }
.group-persiapan { width: 256px; }
.group-persiapan .tools { padding-left: 5px; }
.group-output { width: 317px; }
.group-konsep { width: 67px; }
.group-konsep .tools { padding: 2px 1px 0; }
.group-cetak { width: 260px; }
.group-dokumen { width: 88px; }
.group-bantuan { width: 38px; }
.group-bantuan .tools { padding-left: 4px; }
.big { display: flex; flex-direction: column; align-items: center; gap: 4px; padding-top: 3px; height: 99px; line-height: 21px; white-space: nowrap; border-radius: 3px; }
.w60 { width: 60px; }
.w64 { width: 64px; }
.w70 { width: 68px; }
.w73 { width: 73px; }
.w84 { width: 84px; }
.w108 { width: 110px; }
.open { border: 1px solid #b9943a; padding-top: 2px; background: linear-gradient(#fbd982, #ffdc6d 40%, #ffd55f 70%, #fff1a0); }
.sep { width: 1px; margin: 12px 3px 10px; background: linear-gradient(#fff, #c5c8cc 40%, #c5c8cc 60%, #fff); }
.group-persiapan .sep { margin-left: 5px; }
.group-sistem .sep { margin: 12px 4px 10px 2px; }
.stack { display: flex; flex-direction: column; }
.small { display: flex; align-items: center; gap: 4px; height: 30px; padding: 0 3px; white-space: nowrap; }
.small:disabled { color: #9a9a9a; }
.stack-angket { margin-right: 9px; }
.caret { display: inline-block; border: 4px solid transparent; border-top-color: #5a5a5a; border-bottom: 0; margin: 0 0 3px 1px; }
.almas { font: bold 9px "Open Sans", sans-serif; fill: #128a8a; }
.pdf { font: bold 12px "Open Sans", sans-serif; fill: #f59a1e; stroke: #222; stroke-width: 3px; paint-order: stroke; }

/* drop-down menu */
.menu-anchor { position: relative; }
.menu { position: absolute; z-index: 10; left: 0; top: 99px; width: 360px; padding: 1px; background: #fff; border: 1px solid #a7abb0; border-radius: 0 0 3px 3px; box-shadow: 3px 3px 4px rgba(0,0,0,0.2); }
.menu h3 { background: #f0f2f5; font-size: 15px; font-weight: 700; line-height: 30px; height: 29px; padding-left: 7px; }
.menu-item { position: relative; display: flex; align-items: center; gap: 8px; width: 100%; height: 62px; padding-left: 6px; font-weight: 700; border: 1px solid transparent; border-radius: 3px; text-align: left; }
.menu-item.hover { border-color: #e4c45e; background: linear-gradient(#fcefbc, #fbe18a 50%, #fbdf7e 65%, #fff7c9); }
.cursor { position: absolute; left: 301px; top: 27px; }

/* sheet */
.workspace { flex: 1; display: flex; min-height: 0; }
.sheet { flex: 1; min-width: 0; display: flex; flex-direction: column; overflow: hidden; }
.banner { display: flex; height: 106px; flex: none; border-bottom: 2px solid #000; background: linear-gradient(#653563, #965190 32px); }
.banner-side { width: 379px; padding: 19px 29px; background: repeating-linear-gradient(#6d3669 0 2px, transparent 2px 4px) 0 61px no-repeat; }
.home { display: inline-block; }
.banner-actions { display: flex; align-items: flex-start; gap: 11px; padding: 29px 0 0 306px; }
.btn-hapus { display: flex; align-items: center; gap: 11px; height: 54px; width: 124px; padding-left: 6px; margin-top: 2px; color: #f7e6ea; font: bold 16px/22px Lato, sans-serif; text-align: left; background: linear-gradient(#ae1627, #7f0e1a); }
.btn-teks { width: 76px; height: 54px; color: #fff; font: bold 15px/20px Lato, sans-serif; border: 2px solid #b9a3b8; border-top-color: #fff; border-radius: 6px; background: linear-gradient(#8b5c88, #6a3a67 25%, #6a3a67 80%, #5b2f59); box-shadow: 1px 2px 4px rgba(0,0,0,0.5); }
.sheet-body { flex: 1; display: flex; min-height: 0; background: #e9eaea; background-image: linear-gradient(rgba(255,255,255,0.25) 1px, transparent 1px), linear-gradient(90deg, rgba(255,255,255,0.25) 1px, transparent 1px); background-size: 5px 5px; }

/* settings */
.settings { display: flex; width: 379px; flex: none; color: #000; font-family: Lato, sans-serif; background: #f0e0ef; border-right: 2px solid #ecc04f; }
.settings-form { flex: 1; padding-left: 22px; }
.settings-top { display: flex; align-items: flex-start; justify-content: space-between; padding: 10px 35px 0 0; }
.settings-top h2 { font-size: 21px; font-weight: 700; line-height: 28px; padding-top: 9px; color: #06215f; }
.btn-refresh { width: 108px; height: 28px; color: #efdcef; font: bold 18px/22px Lato, sans-serif; border: 2px solid #000; border-radius: 5px; background: #623462; box-shadow: 1px 3px 4px rgba(0,0,0,0.4); }
.field-paragraf { display: flex; gap: 36px; height: 85px; }
.field-paragraf label { font-size: 19px; font-weight: 700; line-height: 24px; padding-top: 22px; width: 147px; white-space: nowrap; }
.field-logo { display: flex; align-items: center; height: 34px; margin-bottom: 14px; }
.field-logo label { font-size: 17px; font-weight: 700; width: 121px; text-align: right; margin-right: 17px; }
.select { display: grid; width: 141px; height: 34px; }
.select select { grid-area: 1 / 1; appearance: none; width: 100%; border: 1px solid #858585; border-radius: 0; background: #fff; color: #000; font: 16px "Noto Sans", sans-serif; padding: 0 0 0 4px; }
.select-arrow { grid-area: 1 / 1; justify-self: end; width: 32px; margin: 1px; display: flex; align-items: center; justify-content: center; border: 1px solid #ccc; border-radius: 3px; pointer-events: none; }
.select-small { width: 55px; height: 24px; margin-top: -1px; }
.select-small .select-arrow { width: 22px; }
.field-tanggal { display: flex; align-items: center; gap: 11px; padding-top: 292px; }
.field-tanggal label { font-size: 19px; width: 70px; }
.field-tanggal input { width: 218px; height: 34px; border: 1px solid #f0c04a; background: #ffffc9; }
.row-numbers { list-style: none; width: 37px; padding-top: 215px; font-size: 16px; line-height: 36px; text-align: center; }
.row-total { padding-top: 6px; }

/* report */
.report { flex: 1; padding: 42px 59px 0; color: #000; font-family: Lato, sans-serif; }
.report h1 { font: 34px/60px "Open Sans", sans-serif; width: 990px; text-align: center; margin-bottom: 21px; }
table { width: 990px; border-collapse: collapse; table-layout: fixed; font-size: 22px; line-height: 24px; border: 1px solid #000; }
.col-no { width: 74px; }
.col-nama { width: 424px; }
.col-jumlah { width: 214px; }
th { height: 61px; background: #d2b0d0; font-weight: 700; }
th, td { padding: 0; text-align: center; border-right: 1px solid #000; border-bottom: 1px dotted #000; }
td { height: 36px; background: #f0e2ee; }
tbody tr:nth-child(even) td { background: #e2c9e0; }
tbody tr td:first-child { background: #f1f1f1; }
tbody tr:nth-child(even) td:first-child { background: transparent; }
tbody tr:last-child td { border-bottom: 1px solid #000; }
td:nth-child(2) { text-align: left; padding-left: 18px; }
td span { margin-left: 15px; }
tfoot td { height: 42px; background: #f1f2f1; font-weight: 700; }
tfoot td:first-child { border-right: 0; }
.signature { display: grid; grid-template-columns: 623px auto; align-items: end; padding: 42px 0 0 92px; font-size: 21px; line-height: 33px; }

/* scroll bars */
.vscroll { display: flex; flex-direction: column; align-items: center; width: 29px; flex: none; background: #d8dde3; border-right: 4px solid #e4e7ec; box-shadow: inset -1px 0 #8b9097; }
.vscroll button { height: 26px; }
.split-v { width: 24px; height: 11px; border: 1px solid #858a91; background: #fff; box-shadow: inset 0 3px #fff, inset 0 4px #858a91; }
.track-v { flex: 1; width: 100%; padding-top: 26px; }
.thumb-v { display: block; height: 95px; margin-right: 1px; border: 1px solid #858a91; border-radius: 2px; background: linear-gradient(#8b9097, #8b9097) center / 8px 1px no-repeat, linear-gradient(#8b9097, #8b9097) center 49px / 8px 1px no-repeat, linear-gradient(#8b9097, #8b9097) center 43px / 8px 1px no-repeat, linear-gradient(90deg, #f7f9fb, #e0e4ea); }
.hscroll { display: flex; align-items: center; height: 26px; flex: none; padding-right: 29px; background: #dbe0e6; border-bottom: 2px solid #9297a3; }
.hscroll button { width: 26px; display: flex; justify-content: center; }
.track-h { flex: 1; height: 100%; padding-left: 43%; }
.thumb-h { display: block; width: 70%; height: 24px; border: 1px solid #858a91; border-radius: 2px; background: linear-gradient(#8b9097, #8b9097) center / 1px 7px no-repeat, linear-gradient(90deg, transparent 0 calc(50% - 3px), #8b9097 calc(50% - 3px) calc(50% - 2px), transparent calc(50% - 2px) calc(50% + 3px), #8b9097 calc(50% + 3px) calc(50% + 4px), transparent 0) center / 100% 7px no-repeat, linear-gradient(#f7f9fb, #dfe4ea); }
.split-h { width: 11px; height: 24px; border: 1px solid #858a91; background: #fff; box-shadow: inset 3px 0 #fff, inset 4px 0 #858a91; }

/* status bar */
.statusbar { display: flex; align-items: center; gap: 16px; height: 33px; flex: none; padding: 0 4px 2px 8px; background: linear-gradient(#e8eaed, #d0d3d7 45%, #bcc0c5); }
.macro { height: 100%; padding: 0 11px 0 10px; margin-left: -7px; border-left: 1px solid #6f757c; border-right: 1px solid #6f757c; }
.views { display: flex; align-items: center; gap: 7px; height: 100%; margin-left: auto; padding-left: 4px; border-left: 1px solid #6f757c; }
.view.active { width: 28px; height: 29px; display: flex; align-items: center; justify-content: center; margin-right: -4px; border: 1px solid #c2973c; border-radius: 3px; background: linear-gradient(#ffd768, #ffe387); }
.zoom-label { margin-left: -2px; }
.zoom { display: flex; align-items: center; margin-left: -8px; }
#zoom { appearance: none; width: 150px; height: 20px; margin: 0; background: linear-gradient(#83898f, #83898f) center / 100% 1px no-repeat; }
#zoom::-webkit-slider-thumb { appearance: none; width: 13px; height: 19px; border: 1px solid #5d6167; border-radius: 1px 1px 7px 7px; background: #f2f3f4; }
```
